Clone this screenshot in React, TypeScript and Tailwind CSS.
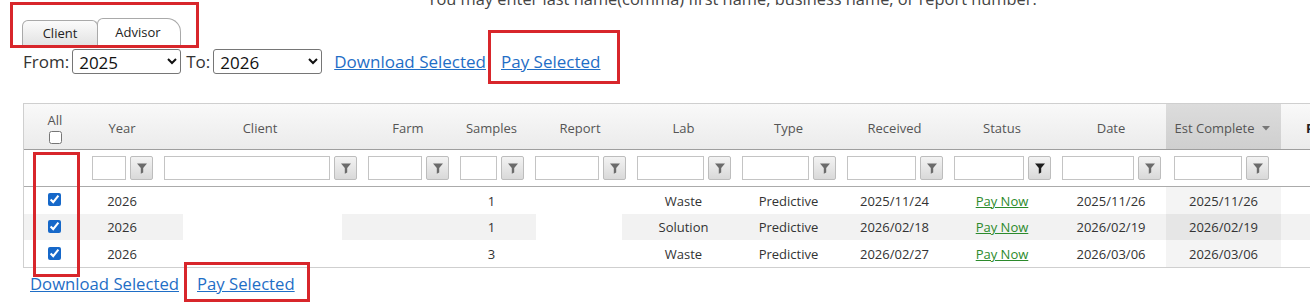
import React from 'react';

const FONT = "font-['Open_Sans','Noto_Sans',sans-serif]";
const COLS =
  'grid grid-cols-[62px_72px_204px_92px_75px_102px_105px_105px_107px_108px_110px_115px_60px]';

type Row = {
  year: string;
  samples: string;
  lab: string;
  type: string;
  received: string;
  date: string;
  est: string;
  alt?: boolean;
};

const rows: Row[] = [
  { year: '2026', samples: '1', lab: 'Waste', type: 'Predictive', received: '2025/11/24', date: '2025/11/26', est: '2025/11/26' },
  { year: '2026', samples: '1', lab: 'Solution', type: 'Predictive', received: '2026/02/18', date: '2026/02/19', est: '2026/02/19', alt: true },
  { year: '2026', samples: '3', lab: 'Waste', type: 'Predictive', received: '2026/02/27', date: '2026/03/06', est: '2026/03/06' },
];

const headers = ['Year', 'Client', 'Farm', 'Samples', 'Report', 'Lab', 'Type', 'Received', 'Status', 'Date'];

function Funnel({ active }: { active?: boolean }) {
  return (
    <svg width="10" height="11" viewBox="0 0 10 11">
      <path d="M0 0.5h10L6.2 5v4.5L3.8 10.8V5z" fill={active ? '#1e1e1e' : '#6b6b6b'} />
    </svg>
  );
}

function FilterCell({ active, wide }: { active?: boolean; wide?: boolean }) {
  return (
    <div className={wide ? 'flex items-center gap-[4px] pl-[8px] pr-[12px]' : 'flex items-center gap-[4px] pl-[6px] pr-[5px]'}>
      <div className="h-[24px] min-w-0 flex-1 border border-[#c4c4c4] bg-white" />
      <div className="flex h-[24px] w-[23px] shrink-0 items-center justify-center rounded-[2px] border border-[#bdbdbd] bg-linear-to-b from-[#f3f3f3] to-[#d9d9d9]">
        <Funnel active={active} />
      </div>
    </div>
  );
}

function RedBox({ className }: { className: string }) {
  return <div className={'pointer-events-none absolute border-[3px] border-[#d8262b] ' + className} />;
}

export default function App() {
  return (
    <div className={`relative h-[304px] w-[1310px] overflow-hidden bg-white text-[#333] ${FONT}`}>
      {/* instructions, cut off at top */}
      <div className="-mt-[13px] flex h-[23px] justify-center pl-[154px] text-[16.4px] leading-[23px] text-[#444]">
        You may enter last name(comma) first name, business name, or report number.
      </div>

      {/* tabs */}
      <div className="mt-[8px] flex h-[28px] items-end pl-[22px] text-[13px] text-[#222]">
        <div className="flex h-[26px] w-[76px] items-center justify-center rounded-t-[6px] border border-b-0 border-[#a9a9a9] bg-linear-to-b from-[#fbfbfb] to-[#e2e2e2]">
          Client
        </div>
        <div className="-ml-px flex h-[28px] w-[84px] items-center justify-center rounded-tl-[6px] rounded-tr-[14px] border border-b-0 border-[#a9a9a9] bg-white pr-[2px]">
          Advisor
        </div>
      </div>

      {/* year range + actions */}
      <div className="mt-[3px] flex h-[25px] items-center pl-[23px] text-[17px]">
        <span className="mr-[3px]">From:</span>
        <select defaultValue="2025" className="h-[25px] w-[109px] rounded-[3px] border border-[#767676] bg-white pl-[2px] text-[17px] text-[#111]">
          <option>2025</option>
          <option>2026</option>
        </select>
        <span className="ml-[5px] mr-[3px]">To:</span>
        <select defaultValue="2026" className="h-[25px] w-[109px] rounded-[3px] border border-[#767676] bg-white pl-[2px] text-[17px] text-[#111]">
          <option>2025</option>
          <option>2026</option>
        </select>
        <a className="ml-[12px] text-[#1f6ec6] underline">Download Selected</a>
        <a className="ml-[15px] text-[#1f6ec6] underline">Pay Selected</a>
      </div>

      {/* grid */}
      <div className="mt-[29px] ml-[23px] w-[1310px] border-t border-l border-b border-[#cfcfcf] text-[13px]">
        <div className={`${COLS} h-[46px] border-b border-[#9e9e9e] bg-linear-to-b from-[#f9f9f9] to-[#ebebeb] pt-[4px] text-[#555]`}>
          <div className="-mt-[4px] flex flex-col items-center justify-center pt-[2px] leading-[16px]">
            <span>All</span>
            <input type="checkbox" className="mt-[3px] h-[13px] w-[13px]" />
          </div>
          {headers.map((h) => (
            <div key={h} className="flex items-center justify-center">
              {h}
            </div>
          ))}
          <div className="-mt-[4px] flex items-center justify-center bg-linear-to-b from-[#dcdcdc] to-[#cfcfcf] pt-[4px] pr-[2px]">
            Est Complete
            <svg className="ml-[8px]" width="8" height="5" viewBox="0 0 8 5">
              <path d="M0 0h8L4 4.5z" fill="#777" />
            </svg>
          </div>
          <div className="flex items-center pl-[25px] font-bold text-[#222]">Pdf</div>
        </div>

        <div className={`${COLS} h-[37px] border-b border-[#ababab] bg-white`}>
          <div />
          <FilterCell />
          <FilterCell />
          <FilterCell />
          <FilterCell />
          <FilterCell />
          <FilterCell />
          <FilterCell />
          <FilterCell />
          <FilterCell active />
          <FilterCell />
          <FilterCell wide />
          <div />
        </div>

        {rows.map((r, i) => (
          <div
            key={i}
            className={`${COLS} h-[26.7px] items-stretch pt-[2px] text-[#333] ${r.alt ? 'bg-[#f2f2f2]' : 'bg-white'}`}
          >
            <div className="-mt-[3px] flex items-center justify-center pr-[2px]">
              <input type="checkbox" defaultChecked className="h-[13px] w-[13px] accent-[#1668c9]" />
            </div>
            <div className="flex items-center justify-center">{r.year}</div>
            <div className="-mt-[2px] flex">
              {r.alt && <div className="ml-[25px] mr-[20px] flex-1 bg-white" />}
            </div>
            <div />
            <div className="flex items-center justify-center">{r.samples}</div>
            <div className="-mt-[2px] flex">
              {r.alt && <div className="ml-[7px] mr-[9px] flex-1 bg-white" />}
            </div>
            <div className="flex items-center justify-center">{r.lab}</div>
            <div className="flex items-center justify-center">{r.type}</div>
            <div className="flex items-center justify-center">{r.received}</div>
            <div className="flex items-center justify-center">
              <a className="text-[#2c8a2c] underline">Pay Now</a>
            </div>
            <div className="flex items-center justify-center">{r.date}</div>
            <div className={`-mt-[2px] flex items-center justify-center pt-[2px] ${r.alt ? 'bg-[#e6e6e6]' : 'bg-[#f4f4f4]'}`}>{r.est}</div>
            <div />
          </div>
        ))}
      </div>

      {/* bottom actions */}
      <div className="mt-[4px] flex pl-[30px] text-[16.7px] leading-[23px]">
        <a className="text-[#1f6ec6] underline">Download Selected</a>
        <a className="ml-[18px] text-[#1f6ec6] underline">Pay Selected</a>
      </div>

      {/* annotation boxes */}
      <RedBox className="left-[10px] top-[2px] h-[46px] w-[189px]" />
      <RedBox className="left-[488px] top-[30px] h-[54px] w-[132px]" />
      <RedBox className="left-[33px] top-[152px] h-[125px] w-[47px]" />
      <RedBox className="left-[184px] top-[262px] h-[40px] w-[126px]" />
    </div>
  );
}
